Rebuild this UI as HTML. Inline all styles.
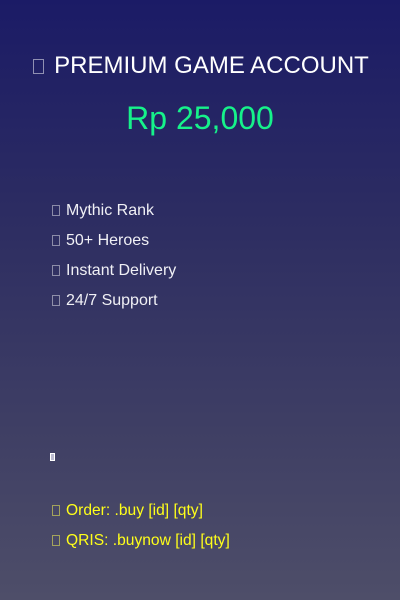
<!DOCTYPE html>
<html><head><meta charset="utf-8"><style>
html,body{margin:0;padding:0}
body{width:400px;height:600px;overflow:hidden;position:relative;font-family:"Liberation Sans",sans-serif;
background:linear-gradient(180deg,#1b1b66 0%,#2c2c62 35%,#3e3e64 70%,#4e4e69 100%);}
.t{position:absolute;white-space:nowrap;}
.box{display:inline-block;border:1px solid rgba(255,255,255,0.5);box-sizing:border-box;}
#title{left:1px;width:400px;text-align:center;top:52px;font-size:24px;color:#fff;}
#title .box{width:11px;height:15px;vertical-align:-1px;margin-right:10px;}
#price{left:0;width:400px;text-align:center;top:100px;font-size:32px;color:#16f28a;}
.f{left:52px;font-size:16px;color:#f0f0f5;}
.f .box{width:8px;height:11px;margin-right:6px;vertical-align:-1px;border-color:rgba(255,255,255,0.45);}
.y{left:52px;font-size:15.6px;color:#ffff1a;}
.y .box{width:8px;height:11px;margin-right:6px;vertical-align:-1px;border-color:rgba(255,255,80,0.5);}
</style></head><body>
<div class="t" id="title"><span class="box"></span>PREMIUM GAME ACCOUNT</div>
<div class="t" id="price">Rp 25,000</div>
<div class="t f" style="top:202px"><span class="box"></span>Mythic Rank</div>
<div class="t f" style="top:232px"><span class="box"></span>50+ Heroes</div>
<div class="t f" style="top:262px"><span class="box"></span>Instant Delivery</div>
<div class="t f" style="top:292px"><span class="box"></span>24/7 Support</div>
<div class="t" style="left:50px;top:453px;width:5px;height:8px;background:#bbbbd0;border:1px solid #fff;box-sizing:border-box"></div>
<div class="t y" style="top:502px"><span class="box"></span>Order: .buy [id] [qty]</div>
<div class="t y" style="top:532px"><span class="box"></span>QRIS: .buynow [id] [qty]</div>
</body></html>
